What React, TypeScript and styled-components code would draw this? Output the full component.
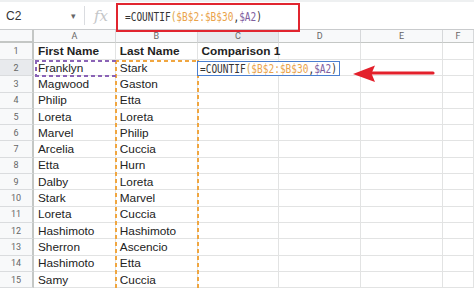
import styled, { createGlobalStyle } from "styled-components";

const GlobalStyle = createGlobalStyle`
  html, body {
    margin: 0;
    padding: 0;
    background: #fff;
    overflow: hidden;
  }
`;

const firstNames = [
  "Franklyn", "Magwood", "Philip", "Loreta", "Marvel", "Arcelia", "Etta",
  "Dalby", "Stark", "Loreta", "Hashimoto", "Sherron", "Hashimoto", "Samy",
];
const lastNames = [
  "Stark", "Gaston", "Etta", "Loreta", "Philip", "Cuccia", "Hurn",
  "Loreta", "Marvel", "Cuccia", "Hashimoto", "Ascencio", "Etta", "Cuccia",
];
const columns = ["A", "B", "C", "D", "E", "F"];

const Formula = () => (
  <>
    =COUNTIF<Paren>(</Paren>
    <RangeRef>$B$2:$B$30</RangeRef>,<CellRef>$A2</CellRef>)
  </>
);

const App = () => {
  return (
    <Page>
      <GlobalStyle />
      <FormulaBar>
        <NameBox>
          C2
          <Caret>▾</Caret>
        </NameBox>
        <Divider />
        <FxLabel>fx</FxLabel>
        <Divider />
        <FormulaText>
          <Mono>
            <Formula />
          </Mono>
        </FormulaText>
        <Callout />
      </FormulaBar>

      <Sheet>
        <Corner $row={1} $col={1} />
        {columns.map((c, i) => (
          <ColHeader key={c} $row={1} $col={i + 2} $active={c === "C"}>
            {c}
          </ColHeader>
        ))}

        <RowHeader $row={2} $col={1}>1</RowHeader>
        <Cell $row={2} $col={2} $bold>First Name</Cell>
        <Cell $row={2} $col={3} $bold>Last Name</Cell>
        <Cell $row={2} $col={4} $bold>Comparison 1</Cell>
        <Cell $row={2} $col={5} />
        <Cell $row={2} $col={6} />
        <Cell $row={2} $col={7} />

        {firstNames.map((first, i) => {
          const row = i + 3;
          return [
            <RowHeader key={`h${i}`} $row={row} $col={1} $active={i === 0}>
              {i + 2}
            </RowHeader>,
            <Cell key={`a${i}`} $row={row} $col={2}>{first}</Cell>,
            <Cell key={`b${i}`} $row={row} $col={3}>{lastNames[i]}</Cell>,
            <Cell key={`c${i}`} $row={row} $col={4} />,
            <Cell key={`d${i}`} $row={row} $col={5} />,
            <Cell key={`e${i}`} $row={row} $col={6} />,
            <Cell key={`f${i}`} $row={row} $col={7} />,
          ];
        })}

        <CopyRange />
        <RefBox />
        <Editor>
          <Mono>
            <Formula />
          </Mono>
        </Editor>
      </Sheet>

      <Arrow width="90" height="24" viewBox="0 0 90 24">
        <line x1="18" y1="11" x2="80" y2="11" stroke="#e3202b" strokeWidth="3.2" strokeLinecap="round" />
        <path d="M0 12 L22 3.5 L18.5 11.5 L22 20 Z" fill="#e3202b" />
      </Arrow>
    </Page>
  );
};

export default App;

const Page = styled.div`
  position: relative;
  width: 474px;
  height: 293px;
  overflow: hidden;
  font-family: "Liberation Sans", Arial, sans-serif;
  color: #222;
`;

const FormulaBar = styled.div`
  position: relative;
  display: flex;
  align-items: center;
  height: 30px;
  border-top: 2px solid #eef0f1;
  border-bottom: 1px solid #c9cbcd;
  box-sizing: border-box;
`;

const NameBox = styled.div`
  display: flex;
  align-items: center;
  justify-content: space-between;
  width: 84px;
  box-sizing: border-box;
  padding: 0 8px 0 6px;
  font-size: 12px;
  color: #333;
`;

const Caret = styled.span`
  font-size: 9px;
  color: #666;
`;

const Divider = styled.div`
  width: 1px;
  height: 19px;
  background: #dadce0;
`;

const FxLabel = styled.div`
  width: 32px;
  text-align: center;
  font-family: "DejaVu Serif", "Liberation Serif", serif;
  font-style: italic;
  font-size: 15px;
  color: #c4c6c8;
`;

const FormulaText = styled.div`
  flex: 1;
  padding-left: 7px;
  padding-top: 1px;
  color: #333;
`;

const Mono = styled.span`
  display: inline-block;
  font-family: "DejaVu Sans Mono", "Liberation Mono", monospace;
  font-size: 12px;
  white-space: nowrap;
  transform: scaleX(0.79);
  transform-origin: left center;
`;

const Paren = styled.span`
  color: #d7a446;
`;

const RangeRef = styled.span`
  color: #eaa34b;
`;

const CellRef = styled.span`
  color: #80609f;
`;

const Callout = styled.div`
  position: absolute;
  left: 116px;
  top: 1px;
  width: 184px;
  height: 29px;
  border: 2px solid #e1252f;
  box-sizing: border-box;
  z-index: 2;
`;

const Sheet = styled.div`
  display: grid;
  grid-template-columns: 34px repeat(5, 81.8px) 1fr;
  grid-template-rows: 13px 17px repeat(14, 16.3px);
`;

type Pos = { $row: number; $col: number };

const Base = styled.div<Pos>`
  grid-row: ${(p) => p.$row};
  grid-column: ${(p) => p.$col};
  box-sizing: border-box;
  display: flex;
  align-items: center;
  white-space: nowrap;
`;

const Corner = styled(Base)`
  background: #f8f9fa;
  border-right: 2px solid #c4c7c5;
  border-bottom: 2px solid #c4c7c5;
`;

const ColHeader = styled(Base)<{ $active?: boolean }>`
  justify-content: center;
  background: ${(p) => (p.$active ? "#e8eaed" : "#f8f9fa")};
  border-right: 1px solid #d6d8da;
  border-bottom: 1px solid #c4c7c5;
  font-family: "Roboto", "Liberation Sans", sans-serif;
  font-size: 9px;
  color: #666;
`;

const RowHeader = styled(Base)<{ $active?: boolean }>`
  justify-content: center;
  background: ${(p) => (p.$active ? "#e8eaed" : "#f8f9fa")};
  border-right: 2px solid #c4c7c5;
  border-bottom: 1px solid #dadcde;
  font-family: "Roboto", "Liberation Sans", sans-serif;
  font-size: 9px;
  color: #666;
`;

const Cell = styled(Base)<{ $bold?: boolean }>`
  padding-left: 4px;
  border-right: 1px solid #e2e3e3;
  border-bottom: 1px solid #e2e3e3;
  font-size: 11.8px;
  font-weight: ${(p) => (p.$bold ? 700 : 400)};
  color: #222;
`;

const CopyRange = styled.div`
  grid-row: 3 / span 15;
  grid-column: 3;
  margin-left: -1px;
  margin-right: -1px;
  pointer-events: none;
  background-image:
    repeating-linear-gradient(to bottom, #f0a640 0 4px, transparent 4px 7px),
    repeating-linear-gradient(to bottom, #f0a640 0 4px, transparent 4px 7px),
    repeating-linear-gradient(to right, #f0a640 0 4px, transparent 4px 7px);
  background-size: 2px 100%, 2px 100%, 100% 2px;
  background-position: left top, right top, left top;
  background-repeat: no-repeat;
`;

const RefBox = styled.div`
  grid-row: 3;
  grid-column: 2;
  margin-left: 1px;
  margin-bottom: -1px;
  pointer-events: none;
  background-image:
    repeating-linear-gradient(to right, #8a63b6 0 4px, transparent 4px 7px),
    repeating-linear-gradient(to right, #8a63b6 0 4px, transparent 4px 7px),
    repeating-linear-gradient(to bottom, #8a63b6 0 4px, transparent 4px 7px);
  background-size: 100% 2px, 100% 2px, 2px 100%;
  background-position: left top, left bottom, left top;
  background-repeat: no-repeat;
`;

const Editor = styled.div`
  grid-row: 3;
  grid-column: 4 / span 3;
  justify-self: start;
  width: 143px;
  margin-left: -1px;
  margin-top: 1px;
  box-sizing: border-box;
  display: flex;
  align-items: center;
  padding-left: 2px;
  background: #fff;
  border: 1.5px solid #4a7fd0;
  color: #333;
  overflow: hidden;
  z-index: 1;
`;

const Arrow = styled.svg`
  position: absolute;
  left: 353px;
  top: 62px;
  z-index: 3;
`;
